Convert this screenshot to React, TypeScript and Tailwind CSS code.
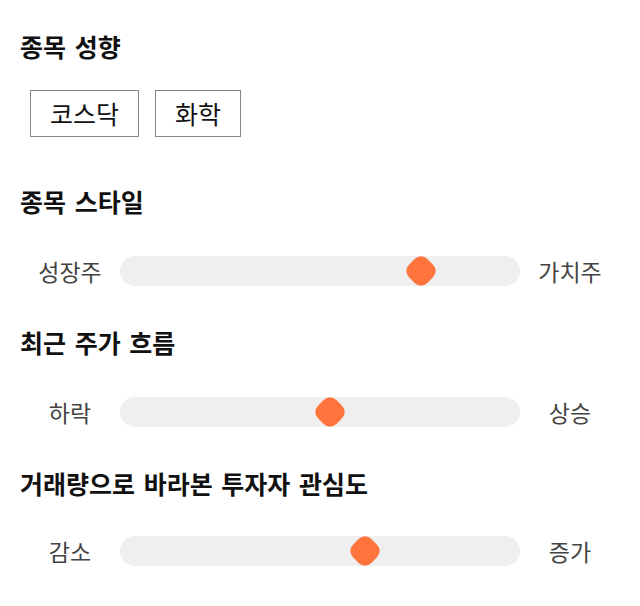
import React from "react";

const font = { fontFamily: '"Noto Sans CJK KR", "Noto Sans", sans-serif' };

function Heading({ children }: { children: React.ReactNode }) {
  return (
    <h2 className="h-8 text-[25px] leading-8 font-bold text-[#111] [word-spacing:3px]">{children}</h2>
  );
}

function RangeRow({ left, right, value }: { left: string; right: string; value: number }) {
  return (
    <div className="flex h-[30px] items-center">
      <span className="w-[100px] text-center text-[23px] leading-[30px] text-[#444]">{left}</span>
      <div className="relative h-[30px] flex-1 rounded-full bg-[#efefef]">
        <div
          className="absolute top-1/2 h-[26px] w-[26px] -translate-x-1/2 -translate-y-1/2 rotate-45 rounded-[9px] bg-[#ff733d]"
          style={{ left: `${value}%` }}
        />
      </div>
      <span className="w-[100px] text-center text-[23px] leading-[30px] text-[#444]">{right}</span>
    </div>
  );
}

export default function App() {
  return (
    <div className="bg-white px-5 pt-[30px] pb-10" style={font}>
      <Heading>종목 성향</Heading>
      <div className="mt-7 ml-[10px] flex gap-4">
        {["코스닥", "화학"].map((t) => (
          <span
            key={t}
            className="flex h-[47px] items-center border border-[#888] px-[19px] text-[25px] leading-[47px] text-[#111]"
          >
            {t}
          </span>
        ))}
      </div>

      <div className="mt-12">
        <Heading>종목 스타일</Heading>
      </div>
      <div className="mt-[39px]">
        <RangeRow left="성장주" right="가치주" value={75.25} />
      </div>

      <div className="mt-10">
        <Heading>최근 주가 흐름</Heading>
      </div>
      <div className="mt-[39px]">
        <RangeRow left="하락" right="상승" value={52.5} />
      </div>

      <div className="mt-10">
        <Heading>거래량으로 바라본 투자자 관심도</Heading>
      </div>
      <div className="mt-[37px]">
        <RangeRow left="감소" right="증가" value={61.25} />
      </div>
    </div>
  );
}
